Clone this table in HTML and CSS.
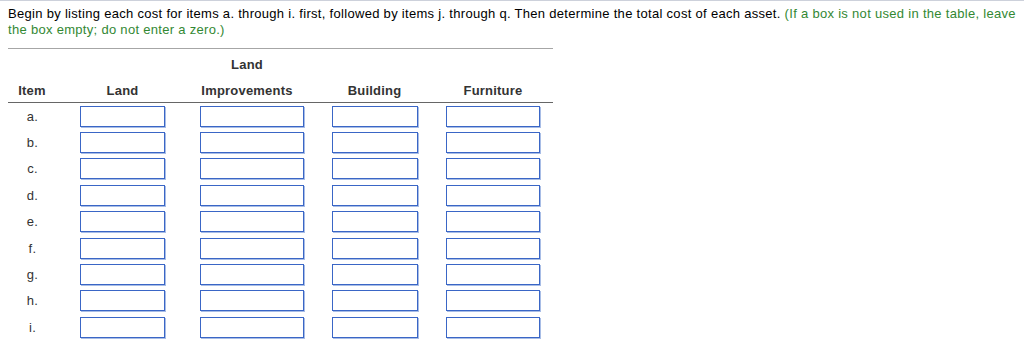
FILE: index.html
```html
<!DOCTYPE html>
<html lang="en">
<head>
    <meta charset="UTF-8">
    <meta name="viewport" content="width=device-width, initial-scale=1.0">
    <title>Asset Cost Allocation</title>
    <link rel="stylesheet" href="styles.css">
</head>
<body>
    <p class="instructions"><span>Begin by listing each cost for items a. through i. first, followed by items j. through q. Then determine the total cost of each asset.</span> <span class="hint">(If a box is not used in the table, leave the box empty; do not enter a zero.)</span></p>

    <div class="cost-table">
        <div class="head">Item</div>
        <div class="head">Land</div>
        <div class="head head-imp"><span class="head-top">Land</span>Improvements</div>
        <div class="head">Building</div>
        <div class="head">Furniture</div>
        <div class="head"></div>
    </div>
    <div class="cost-rows" id="costRows"></div>

    <script>
        const items = ["a.", "b.", "c.", "d.", "e.", "f.", "g.", "h.", "i."];
        const rows = document.getElementById("costRows");
        items.forEach((item) => {
            const label = document.createElement("div");
            label.className = "item-label";
            label.textContent = item;
            rows.appendChild(label);
            ["land", "imp", "building", "furniture"].forEach((col) => {
                const cell = document.createElement("div");
                cell.className = "cell";
                const input = document.createElement("input");
                input.type = "text";
                input.className = "box box-" + col;
                cell.appendChild(input);
                rows.appendChild(cell);
            });
            rows.appendChild(document.createElement("div"));
        });
    </script>
</body>
</html>
```

FILE: styles.css
```css
body {
    margin: 0;
    padding: 0 8px;
    border-top: 1px solid #cdd1db;
    font-family: "Liberation Sans", Arial, sans-serif;
    color: #000;
    background: #fff;
}
.instructions {
    margin: 0;
    padding-top: 5px;
    font-size: 13px;
    line-height: 16px;
    letter-spacing: 0.3px;
}
.hint {
    color: #338833;
}
.cost-table,
.cost-rows {
    display: grid;
    grid-template-columns: 48px 133px 118px 135px 102px 9px;
    width: 545px;
}
.cost-table {
    margin-top: 10px;
    border-top: 1px solid #a6a6a6;
    border-bottom: 1px solid #666;
    padding-top: 6px;
    align-items: end;
}
.head {
    font-size: 13px;
    font-weight: bold;
    letter-spacing: 0.2px;
    color: #333;
    text-align: center;
    line-height: 20px;
    padding-bottom: 1px;
}
.head-imp {
    padding-right: 2px;
}
.head-top {
    display: block;
    margin-bottom: 6px;
}
.cost-rows {
    grid-auto-rows: 26.4px;
    align-items: center;
}
.item-label {
    font-size: 13px;
    letter-spacing: 0.3px;
    color: #333;
    text-align: center;
    padding-left: 1px;
}
.cell {
    display: flex;
    justify-content: center;
}
.box {
    box-sizing: border-box;
    height: 21px;
    margin: 0;
    padding: 0 4px;
    border: 1px solid #3a66c6;
    border-radius: 0;
    box-shadow: 1px 1px 0 #a8bde6;
    background: #fff;
    font-family: inherit;
    font-size: 13px;
}
.box-land {
    width: 85px;
}
.box-imp {
    width: 104px;
    margin-left: 8px;
}
.box-building {
    width: 86px;
}
.box-furniture {
    width: 94px;
}
```
